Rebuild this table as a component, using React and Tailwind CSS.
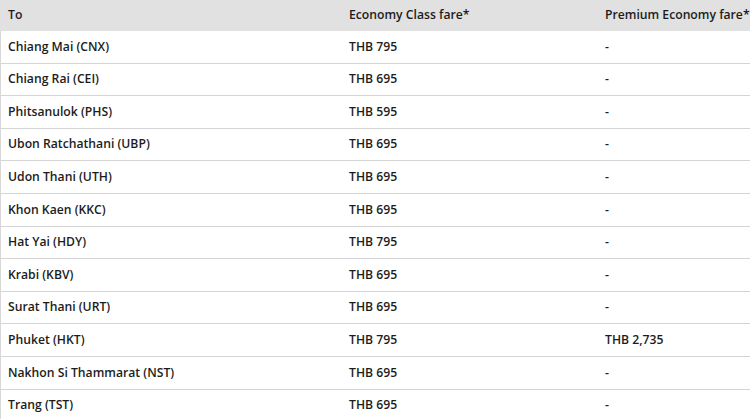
import React from 'react';

const rows = [
  ['Chiang Mai (CNX)', 'THB 795', '-'],
  ['Chiang Rai (CEI)', 'THB 695', '-'],
  ['Phitsanulok (PHS)', 'THB 595', '-'],
  ['Ubon Ratchathani (UBP)', 'THB 695', '-'],
  ['Udon Thani (UTH)', 'THB 695', '-'],
  ['Khon Kaen (KKC)', 'THB 695', '-'],
  ['Hat Yai (HDY)', 'THB 795', '-'],
  ['Krabi (KBV)', 'THB 695', '-'],
  ['Surat Thani (URT)', 'THB 695', '-'],
  ['Phuket (HKT)', 'THB 795', 'THB 2,735'],
  ['Nakhon Si Thammarat (NST)', 'THB 695', '-'],
  ['Trang (TST)', 'THB 695', '-'],
];

export default function App() {
  return (
    <div className="w-[750px] h-[419px] overflow-hidden bg-white font-['Open_Sans',sans-serif] text-[12.2px] font-semibold text-[#1c1c1c] whitespace-nowrap">
      <div className="grid h-[31px] grid-cols-[341px_256px_1fr] items-center bg-[#e1e1e1]">
        <div className="px-2">To</div>
        <div className="px-2">Economy Class fare*</div>
        <div className="pl-2">Premium Economy fare*</div>
      </div>
      <div className="border-l border-[#d8d8d8]">
        {rows.map((r, i) => (
          <div
            key={i}
            className="grid h-[32.6px] grid-cols-[340px_256px_1fr] items-center border-b border-[#d4d4d4]"
          >
            <div className="px-[7px]">{r[0]}</div>
            <div className="px-2">{r[1]}</div>
            <div className="pl-2">{r[2]}</div>
          </div>
        ))}
      </div>
    </div>
  );
}
